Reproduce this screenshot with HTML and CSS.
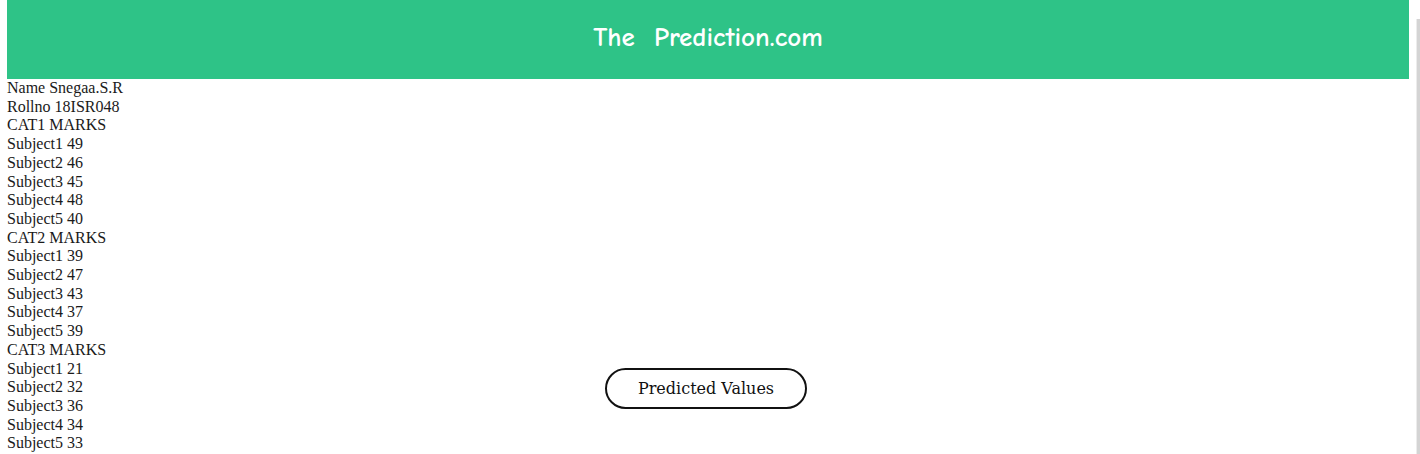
FILE: index.html
```html
<!DOCTYPE html>
<html>
<head>
<meta charset="utf-8">
<title>The Prediction.com</title>
<link rel="stylesheet" href="styles.css">
</head>
<body>
<div class="page">
  <header class="banner">
    <h1 class="title">The&nbsp; Prediction.com</h1>
  </header>
  <main class="content">
    <div class="details">
      <div class="line">Name Snegaa.S.R</div>
      <div class="line">Rollno 18ISR048</div>
      <div class="line">CAT1 MARKS</div>
      <div class="line">Subject1 49</div>
      <div class="line">Subject2 46</div>
      <div class="line">Subject3 45</div>
      <div class="line">Subject4 48</div>
      <div class="line">Subject5 40</div>
      <div class="line">CAT2 MARKS</div>
      <div class="line">Subject1 39</div>
      <div class="line">Subject2 47</div>
      <div class="line">Subject3 43</div>
      <div class="line">Subject4 37</div>
      <div class="line">Subject5 39</div>
      <div class="line">CAT3 MARKS</div>
      <div class="line">Subject1 21</div>
      <div class="line">Subject2 32</div>
      <div class="line">Subject3 36</div>
      <div class="line">Subject4 34</div>
      <div class="line">Subject5 33</div>
    </div>
    <button class="predict-btn" type="button">Predicted Values</button>
  </main>
</div>
<div class="scroll-track"></div>
</body>
</html>
```
FILE: styles.css
```css
html, body {
  margin: 0;
  padding: 0;
  background: #ffffff;
  overflow: hidden;
}

body {
  font-family: "Liberation Serif", "Times New Roman", serif;
  color: #1a1a1a;
}

.page {
  margin: 0 11px 0 7px;
  display: flex;
  flex-direction: column;
}

.banner {
  background: #2ec387;
  height: 79px;
  display: flex;
  align-items: center;
  justify-content: center;
}

.title {
  margin: 0 0 4px 0;
  font-family: "Comic Sans MS", "Comic Neue", "DejaVu Sans", sans-serif;
  font-weight: 600;
  font-size: 27px;
  color: #ffffff;
  letter-spacing: 0;
}

.content {
  display: grid;
}

.details {
  grid-area: 1 / 1;
  justify-self: start;
  font-size: 16px;
  line-height: 18.7px;
}

.predict-btn {
  grid-area: 1 / 1;
  justify-self: center;
  align-self: end;
  margin: 0 4px 44px 0;
  width: 202px;
  height: 41px;
  border: 2px solid #111111;
  border-radius: 21px;
  background: #ffffff;
  font-family: "DejaVu Serif", Georgia, serif;
  font-size: 16px;
  color: #111111;
  padding: 0;
}

.scroll-track {
  position: absolute;
  top: 19px;
  right: 0;
  width: 3px;
  height: 440px;
  background: #d4d4d4;
  border-left: 1px solid #ececec;
}
```
